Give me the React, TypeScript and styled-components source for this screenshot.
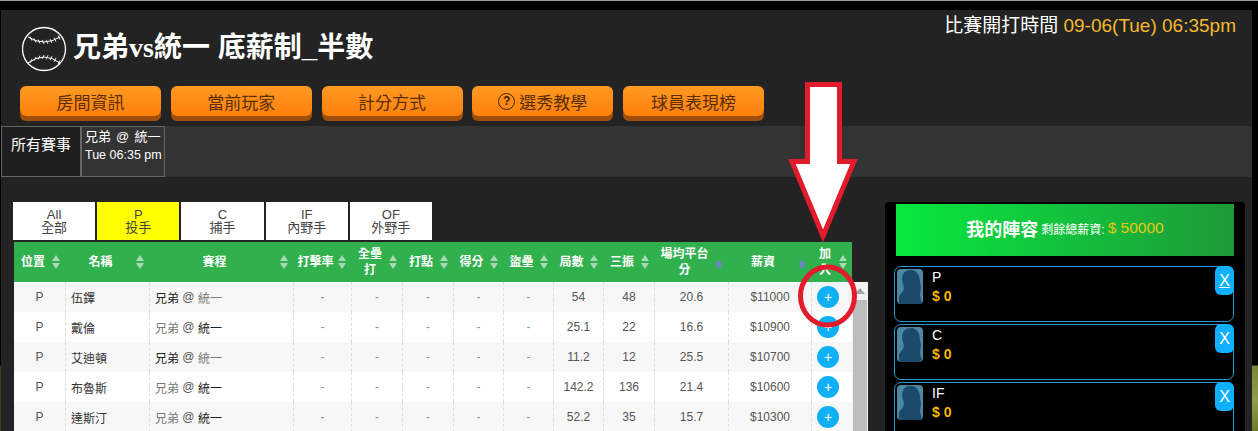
import React from 'react';
import styled, {createGlobalStyle} from 'styled-components';

const GlobalStyle = createGlobalStyle`
    html, body {
        margin: 0;
        padding: 0;
        background: #000;
    }
    * {
        box-sizing: border-box;
    }
`;

const COLUMNS = '51px 84px 144px 58px 51px 51px 50px 50px 50px 51px 74px 83px 41px';

const Page = styled.div`
    position: relative;
    width: 1258px;
    height: 431px;
    overflow: hidden;
    padding-top: 9px;
    border-top: 1px solid #9a9a9a;
    background:
        linear-gradient(to bottom, #000 0, #000 364px, #3a3f1c 365px, #3a3f1c 431px) 0 0 / 1px 100% no-repeat,
        linear-gradient(to bottom, #000 0, #000 364px, #77863a 365px, #8f9c4c 400px, #6c7a30 431px);
    font-family: "Liberation Sans", "Noto Sans CJK TC", sans-serif;
`;
const Panel = styled.div`
    margin: 0 6px 0 1px;
    height: 440px;
    background: #232323;
`;
const Header = styled.header`
    height: 116px;
    padding: 6px 16px 0 21px;
`;
const TitleRow = styled.div`
    display: flex;
    justify-content: space-between;
    align-items: flex-start;
    height: 70px;
`;
const TitleGroup = styled.div`
    display: flex;
    align-items: flex-start;
    gap: 5px;
    margin-top: 10px;
`;
const Title = styled.h1`
    margin: 0;
    font-size: 28px;
    line-height: 44px;
    font-weight: bold;
    color: #fff;
    white-space: nowrap;
`;
const Versus = styled.span`
    font-family: "Liberation Serif", serif;
`;
const StartTime = styled.div`
    font-size: 19px;
    line-height: 20px;
    color: #fff;
    white-space: nowrap;
`;
const StartValue = styled.span`
    color: #f6b92c;
`;
const Toolbar = styled.nav`
    display: flex;
    gap: 9.75px;
    margin-left: -2px;
`;
const OrangeButton = styled.button`
    display: flex;
    align-items: center;
    justify-content: center;
    gap: 4px;
    width: 141px;
    height: 30px;
    padding: 0;
    border: 0;
    border-radius: 6px;
    background: linear-gradient(to bottom, #ff9a22, #ff7f0c);
    box-shadow: 0 5px 0 #a04f0a;
    color: #5a2e04;
    font-family: inherit;
    font-size: 17px;
`;
const HelpMark = styled.span`
    display: inline-flex;
    align-items: center;
    justify-content: center;
    width: 17px;
    height: 17px;
    border: 1.5px solid #3e2003;
    border-radius: 50%;
    color: #3e2003;
    font-size: 12px;
    font-weight: bold;
`;
const EventBand = styled.div`
    display: flex;
    height: 51px;
    background: #333;
`;
const AllEvents = styled.div`
    width: 80px;
    padding-top: 9px;
    border: 1px solid #666;
    background: #1e1e1e;
    color: #fff;
    font-size: 15px;
    line-height: 18px;
    text-align: center;
`;
const EventCard = styled.div`
    width: 84px;
    padding: 1px 0 0 3px;
    border: 1px solid #666;
    color: #fff;
    font-size: 13px;
    line-height: 18px;
    word-spacing: 1.5px;
    white-space: nowrap;
`;
const EventTime = styled.div`
    font-size: 12.5px;
    word-spacing: 0;
`;
const Content = styled.main`
    display: flex;
    gap: 17px;
    padding: 25px 7px 0 12px;
`;
const PlayerColumn = styled.section`
    width: 855px;
    flex: none;
`;
const PositionTabs = styled.div`
    display: flex;
    gap: 2px;
    margin-bottom: 2px;
`;
const PositionTab = styled.div<{$active?: boolean}>`
    width: 82.2px;
    height: 38px;
    padding-top: 6px;
    background: ${({$active}) => ($active ? '#ff0' : '#fff')};
    color: #444;
    font-size: 13px;
    line-height: 13px;
    text-align: center;
`;
const TableHead = styled.div`
    display: grid;
    grid-template-columns: ${COLUMNS};
    width: 838px;
    height: 40px;
    margin-left: 1px;
    background: #31b04e;
`;
const HeadCell = styled.div`
    display: flex;
    align-items: center;
    padding-right: 5px;
    color: #fff;
    font-size: 12px;
    font-weight: bold;
    line-height: 16px;
`;
const HeadLabel = styled.span`
    flex: 1;
    padding: 0 3px;
    text-align: center;
`;
const TableBody = styled.div`
    display: flex;
    margin-left: 1px;
`;
const Rows = styled.div`
    width: 838px;
    flex: none;
`;
const Row = styled.div`
    display: grid;
    grid-template-columns: ${COLUMNS};
    height: 30px;
    background: #fff;
    &:nth-child(odd) {
        background: #f7f7f7;
    }
`;
const Cell = styled.div<{$align?: 'left' | 'center'}>`
    display: flex;
    align-items: center;
    justify-content: ${({$align}) => ($align === 'left' ? 'flex-start' : 'center')};
    padding-left: ${({$align}) => ($align === 'left' ? '5px' : '0')};
    border-left: 1px dashed #dcdcdc;
    color: #555;
    font-size: 12px;
    white-space: pre;
    &:first-child {
        border-left: 0;
    }
`;
const Dash = styled.span`
    color: #7a9ab8;
`;
const Name = styled.span`
    color: #333;
`;
const Team = styled.span<{$home?: boolean}>`
    color: ${({$home}) => ($home ? '#222' : '#777')};
`;
const AddButton = styled.button`
    display: flex;
    align-items: center;
    justify-content: center;
    width: 22px;
    height: 22px;
    padding: 0;
    border: 0;
    border-radius: 50%;
    background: #0fb0f5;
    color: #fff;
    font-family: inherit;
    font-size: 14px;
`;
const ScrollTrack = styled.div`
    display: flex;
    flex-direction: column;
    align-items: center;
    width: 16px;
    height: 150px;
    background: #f1f1f1;
`;
const ScrollArrow = styled.div`
    height: 18px;
    padding-top: 6px;
    line-height: 0;
`;
const ScrollThumb = styled.div`
    width: 14px;
    flex: 1;
    background: #bdbdbd;
`;
const Lineup = styled.aside`
    width: 360px;
    flex: none;
    height: 300px;
    padding: 2px 11px 0 9px;
    border-radius: 4px;
    background: #000;
`;
const LineupTitle = styled.div`
    display: flex;
    align-items: center;
    justify-content: center;
    gap: 3px;
    height: 52px;
    margin: 0 0 10px 2px;
    padding-bottom: 4px;
    background: linear-gradient(to right, #07e83e, #1f9a3a);
    color: #fff;
    white-space: nowrap;
`;
const LineupHeading = styled.span`
    font-size: 18px;
    font-weight: bold;
`;
const LineupBudget = styled.span`
    font-size: 12px;
`;
const LineupMoney = styled.span`
    color: #e8c80e;
    font-size: 15.5px;
`;
const Slot = styled.div`
    display: flex;
    height: 56px;
    margin-bottom: 2px;
    padding: 2px 0 0 2px;
    border: 1px solid #2a9bd0;
    border-radius: 7px;
`;
const Portrait = styled.svg`
    flex: none;
    width: 26px;
    height: 35px;
    border-radius: 4px;
`;
const SlotText = styled.div`
    margin: -1px 0 0 9px;
    color: #fff;
    font-size: 14px;
    line-height: 19px;
`;
const SlotPrice = styled.div`
    color: #f7b500;
    font-weight: bold;
`;
const RemoveButton = styled.button<{$underline?: boolean}>`
    width: 19px;
    height: 29px;
    margin: -3px -1px 0 auto;
    padding: 0;
    border: 0;
    border-radius: 6px;
    background: #10b0ff;
    color: #fff;
    font-family: inherit;
    font-size: 16px;
    text-decoration: ${({$underline}) => ($underline ? 'underline' : 'none')};
`;
const Annotation = styled.svg`
    position: absolute;
    left: 780px;
    top: 74px;
    width: 85px;
    height: 260px;
`;

function Baseball() {
    const stitches = [31, 35, 39, 43, 47, 51, 55, 59];
    const bow = (x: number, depth: number) => {
        const t = (x - 28) / 32;
        return 2 * t * (1 - t) * depth;
    };
    return (
        <svg width="46" height="46" viewBox="22 26 46 46" fill="none" stroke="#fff">
            <circle cx="44" cy="49" r="21.5" strokeWidth="1.3" />
            <path d="M28 37 Q44 47 60 37" strokeWidth="1" />
            <path d="M28 63 Q44 51 60 63" strokeWidth="1" />
            {stitches.map((x) => (
                <React.Fragment key={x}>
                    <path d={`M${x - 1} ${35 + bow(x, 10)} l2 4`} strokeWidth="0.9" />
                    <path d={`M${x - 1} ${65 - bow(x, 12)} l2 -4`} strokeWidth="0.9" />
                </React.Fragment>
            ))}
        </svg>
    );
}

function SortIcon({active}: {active?: boolean}) {
    if (active) {
        return (
            <svg width="8" height="14" viewBox="0 0 8 14">
                <path d="M1 8 L4 5.5 L7 8 L6 12 L4 13.5 L2 12 Z" fill="#6c83cf" />
            </svg>
        );
    }
    return (
        <svg width="8" height="14" viewBox="0 0 8 14" fill="#a8d8b4">
            <path d="M4 0 L8 6 H0 Z" />
            <path d="M0 8 H8 L4 14 Z" />
        </svg>
    );
}

const columns = [
    {label: '位置'},
    {label: '名稱'},
    {label: '賽程'},
    {label: '打擊率'},
    {label: '全壘打'},
    {label: '打點'},
    {label: '得分'},
    {label: '盜壘'},
    {label: '局數'},
    {label: '三振'},
    {label: '場均平台分', active: true},
    {label: '薪資', active: true},
    {label: '加入'},
];

const players = [
    {name: '伍鐸', home: true, ip: '54', so: '48', avg: '20.6', pay: '$11000'},
    {name: '戴倫', home: false, ip: '25.1', so: '22', avg: '16.6', pay: '$10900'},
    {name: '艾迪頓', home: true, ip: '11.2', so: '12', avg: '25.5', pay: '$10700'},
    {name: '布魯斯', home: false, ip: '142.2', so: '136', avg: '21.4', pay: '$10600'},
    {name: '達斯汀', home: false, ip: '52.2', so: '35', avg: '15.7', pay: '$10300'},
];

const tabs = [
    {code: 'All', label: '全部'},
    {code: 'P', label: '投手', active: true},
    {code: 'C', label: '捕手'},
    {code: 'IF', label: '內野手'},
    {code: 'OF', label: '外野手'},
];

function PlayerRow({player}: {player: typeof players[number]}) {
    return (
        <Row>
            <Cell>P</Cell>
            <Cell $align="left"><Name>{player.name}</Name></Cell>
            <Cell $align="left">
                <Team $home={player.home}>兄弟</Team> @ <Team $home={!player.home}>統一</Team>
            </Cell>
            {[0, 1, 2, 3, 4].map((i) => (
                <Cell key={i}><Dash>-</Dash></Cell>
            ))}
            <Cell>{player.ip}</Cell>
            <Cell>{player.so}</Cell>
            <Cell>{player.avg}</Cell>
            <Cell>{player.pay}</Cell>
            <Cell $align="left"><AddButton>+</AddButton></Cell>
        </Row>
    );
}

function LineupSlot({position, underline}: {position: string; underline?: boolean}) {
    return (
        <Slot>
            <Portrait viewBox="0 0 26 35">
                <rect width="26" height="35" fill="#4a88a4" />
                <path d="M5 35 L2 35 L2 27 L6 22 C7 20 7 18 6 15 C4 9 5 1 14 1 C21 1 23 8 23 13 L24 18 L23 26 L25 35 Z" fill="#1c4a6a" />
            </Portrait>
            <SlotText>
                {position}
                <SlotPrice>$ 0</SlotPrice>
            </SlotText>
            <RemoveButton $underline={underline}>X</RemoveButton>
        </Slot>
    );
}

export default function App() {
    return (
        <Page>
            <GlobalStyle />
            <Panel>
                <Header>
                    <TitleRow>
                        <TitleGroup>
                            <Baseball />
                            <Title>兄弟<Versus>vs</Versus>統一 底薪制_半數</Title>
                        </TitleGroup>
                        <StartTime>比賽開打時間 <StartValue>09-06(Tue) 06:35pm</StartValue></StartTime>
                    </TitleRow>
                    <Toolbar>
                        <OrangeButton>房間資訊</OrangeButton>
                        <OrangeButton>當前玩家</OrangeButton>
                        <OrangeButton>計分方式</OrangeButton>
                        <OrangeButton><HelpMark>?</HelpMark>選秀教學</OrangeButton>
                        <OrangeButton>球員表現榜</OrangeButton>
                    </Toolbar>
                </Header>
                <EventBand>
                    <AllEvents>所有賽事</AllEvents>
                    <EventCard>
                        兄弟 @ 統一
                        <EventTime>Tue 06:35 pm</EventTime>
                    </EventCard>
                </EventBand>
                <Content>
                    <PlayerColumn>
                        <PositionTabs>
                            {tabs.map((tab) => (
                                <PositionTab key={tab.code} $active={tab.active}>
                                    {tab.code}<br />{tab.label}
                                </PositionTab>
                            ))}
                        </PositionTabs>
                        <TableHead>
                            {columns.map((col) => (
                                <HeadCell key={col.label}>
                                    <HeadLabel>{col.label}</HeadLabel>
                                    <SortIcon active={col.active} />
                                </HeadCell>
                            ))}
                        </TableHead>
                        <TableBody>
                            <Rows>
                                {players.map((player) => (
                                    <PlayerRow key={player.name} player={player} />
                                ))}
                            </Rows>
                            <ScrollTrack>
                                <ScrollArrow>
                                    <svg width="10" height="6" viewBox="0 0 10 6"><path d="M5 0 L10 6 H0 Z" fill="#a3a3a3" /></svg>
                                </ScrollArrow>
                                <ScrollThumb />
                            </ScrollTrack>
                        </TableBody>
                    </PlayerColumn>
                    <Lineup>
                        <LineupTitle>
                            <LineupHeading>我的陣容</LineupHeading>
                            <LineupBudget>剩餘總薪資:</LineupBudget>
                            <LineupMoney>$ 50000</LineupMoney>
                        </LineupTitle>
                        <LineupSlot position="P" underline />
                        <LineupSlot position="C" />
                        <LineupSlot position="IF" />
                    </Lineup>
                </Content>
            </Panel>
            <Annotation viewBox="780 75 85 260" fill="none" stroke="#e21b2d" strokeWidth="5">
                <polygon
                    points="807.5,84.5 839.5,84.5 839.5,161.5 854,161.5 823,236 792,161.5 807.5,161.5"
                    fill="#fff"
                    strokeMiterlimit="10"
                />
                <ellipse cx="827.5" cy="296" rx="27" ry="29" />
            </Annotation>
        </Page>
    );
}
